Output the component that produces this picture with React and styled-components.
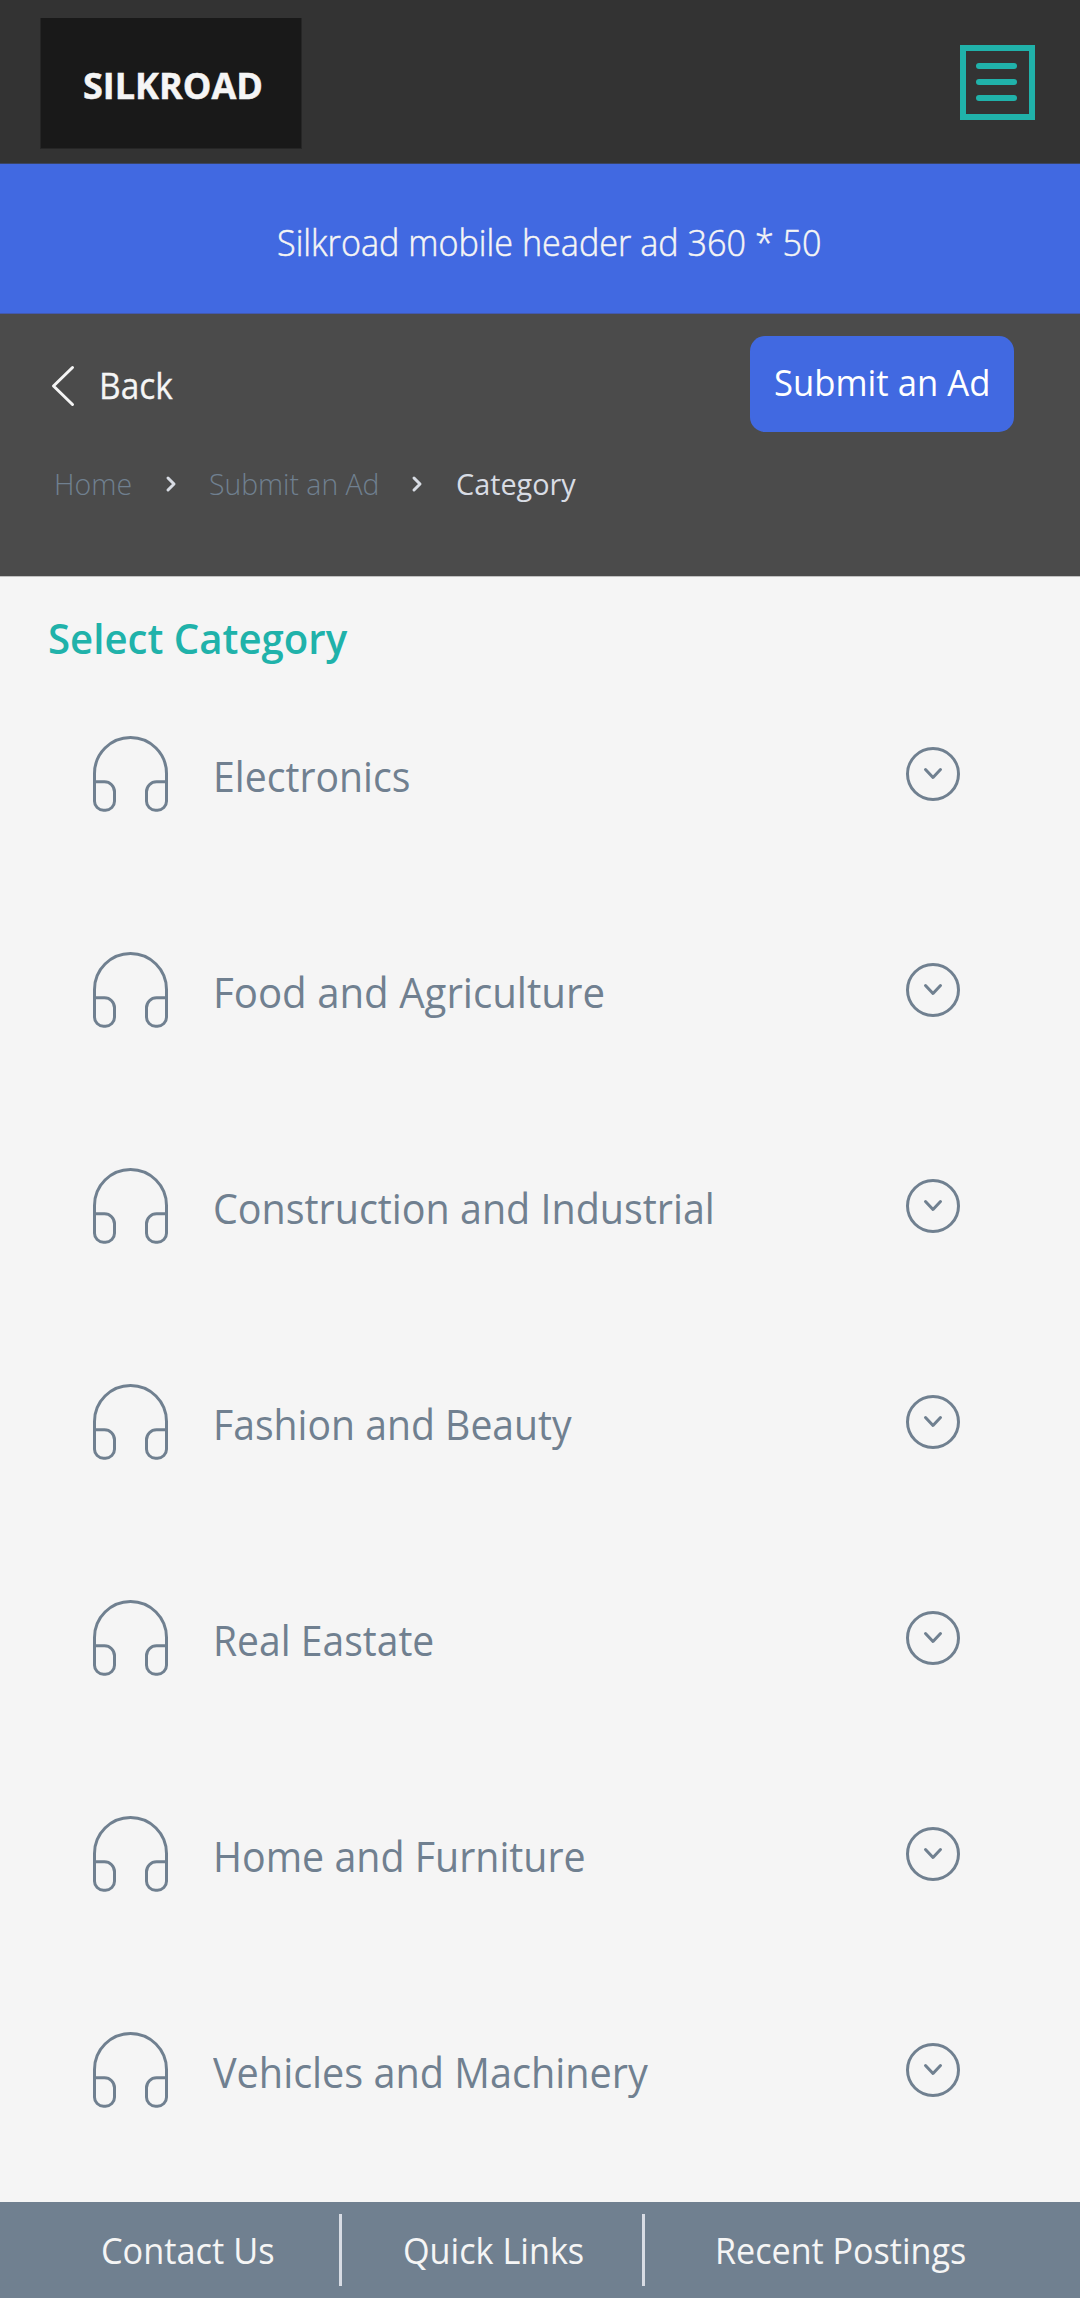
import React from 'react';
import styled, { createGlobalStyle } from 'styled-components';

const Global = createGlobalStyle`
  * { box-sizing: border-box; }
  body { margin: 0; background: #f5f5f5; font-family: "Open Sans", "Noto Sans", sans-serif; }
`;

const Page = styled.div`
  width: 1080px;
  height: 2298px;
  display: flex;
  flex-direction: column;
  background: #f5f5f5;
  overflow: hidden;
`;

/* Slightly condensed text run. */
const Text = styled.span`
  display: inline-block;
  justify-self: start;
  white-space: nowrap;
  transform-origin: left center;
  transform: scaleX(${p => p.$fit || 1});
  font-size: ${p => p.$size || 36}px;
  font-weight: ${p => p.$weight || 400};
  color: ${p => p.$color || '#f5f5f5'};
  -webkit-text-stroke: ${p => p.$stroke || 0}px currentColor;
`;

const Header = styled.header`
  height: 164px;
  flex: none;
  display: flex;
  justify-content: space-between;
  align-items: flex-start;
  padding: 18px 45px 0 40px;
  background: #333333;
  border-bottom: 1px solid #3a4566;
`;

const Logo = styled.div`
  width: 262px;
  height: 131px;
  display: flex;
  align-items: center;
  padding: 5px 0 0 42px;
  background: #191919;
  border: 1px solid #262626;
  border-top: 0;
`;

const MenuButton = styled.button`
  width: 75px;
  height: 75px;
  margin: 27px 0 0;
  padding: 12px 12px 0 10px;
  display: flex;
  flex-direction: column;
  gap: 10px;
  background: none;
  border: 6px solid #20b2aa;
`;

const Bar = styled.span`
  width: 41px;
  height: 6px;
  flex: none;
  border-radius: 3px;
  background: #20b2aa;
`;

const AdBanner = styled.section`
  height: 150px;
  flex: none;
  display: flex;
  align-items: center;
  padding: 8px 0 0 277px;
  background: #4169e1;
  border-bottom: 1px solid #4359ae;
`;

const NavPanel = styled.section`
  height: 263px;
  flex: none;
  padding: 22px 66px 0 50px;
  background: #4b4b4b;
  border-bottom: 1px solid #c0c0c0;
`;

const NavTop = styled.div`
  height: 96px;
  display: flex;
  justify-content: space-between;
`;

const BackLink = styled.div`
  display: flex;
  align-items: center;
  gap: 23px;
  padding-top: 3px;
`;

const SubmitButton = styled.button`
  width: 264px;
  height: 96px;
  padding: 0 0 3px 24px;
  display: flex;
  align-items: center;
  border: 0;
  border-radius: 15px;
  background: #4169e1;
  font-family: inherit;
`;

const Breadcrumb = styled.nav`
  display: grid;
  grid-template-columns: 110px 45px 201px 46px auto;
  align-items: center;
  margin-top: 32px;
  padding-left: 4px;
  line-height: 39px;
`;

const CrumbArrow = styled.svg`
  width: 14px;
  height: 20px;
  margin-top: 1px;
  display: block;
`;

const Main = styled.main`
  flex: 1;
`;

const Title = styled.h1`
  height: 89px;
  margin: 0;
  padding: 30px 0 0 48px;
  line-height: 62px;
  font-size: 42px;
`;

const Row = styled.div`
  height: 216px;
  display: grid;
  grid-template-columns: 122px 691px 58px;
  align-items: center;
  padding-left: 91px;
`;

const RowLabel = styled.div`
  padding-top: 2px;
`;

const Icon = styled.svg`
  display: block;
  width: ${p => p.$w}px;
  height: ${p => p.$h}px;
  fill: none;
  stroke: ${p => p.$color || '#708090'};
  stroke-width: 3;
  stroke-linecap: round;
  stroke-linejoin: round;
`;

const Footer = styled.footer`
  height: 96px;
  flex: none;
  display: grid;
  grid-template-columns: 238px 64px 239px 73px auto;
  align-items: center;
  padding-left: 101px;
  background: #708090;
`;

const FooterLink = styled(Text)`
  margin-top: 1px;
`;

const Divider = styled.span`
  width: 3px;
  height: 72px;
  background: #d8dce4;
`;

const Headphones = () => (
  <Icon $w={79} $h={80} viewBox="0 0 79 80">
    <path d="M3.5 47.800H13.500a10 10 0 0 1 10 10V67.200a9 9 0 0 1-9 9H12.500a9 9 0 0 1-9-9V39.500a36 36 0 0 1 72 0V67.200a9 9 0 0 1-9 9H64.500a9 9 0 0 1-9-9V57.800a10 10 0 0 1 10-10H75.500" />
  </Icon>
);

const Expand = () => (
  <Icon $w={58} $h={58} viewBox="0 0 58 58">
    <circle cx="29" cy="29" r="25.500" />
    <path d="M21.500 24.500L29 32.500L36.500 24.500" />
  </Icon>
);

const Crumb = () => (
  <CrumbArrow viewBox="0 0 14 20">
    <path d="M4 4L10 10L4 16" fill="none" stroke="#d8dce4" strokeWidth="3" strokeLinecap="round" strokeLinejoin="round" />
  </CrumbArrow>
);

const categories = [
  ['Electronics', 0.933],
  ['Food and Agriculture', 0.957],
  ['Construction and Industrial', 0.939],
  ['Fashion and Beauty', 0.932],
  ['Real Eastate', 0.93],
  ['Home and Furniture', 0.937],
  ['Vehicles and Machinery', 0.943],
];

export default function App() {
  return (
    <Page>
      <Global />
      <Header>
        <Logo><Text $weight={700} $stroke={0.5}>SILKROAD</Text></Logo>
        <MenuButton aria-label="Menu"><Bar /><Bar /><Bar /></MenuButton>
      </Header>
      <AdBanner>
        <Text $weight={300} $fit={0.949} $stroke={0.5}>Silkroad mobile header ad 360 * 50</Text>
      </AdBanner>
      <NavPanel>
        <NavTop>
          <BackLink>
            <Icon $w={26} $h={44} $color="#f5f5f5" viewBox="0 0 26 44">
              <path d="M22.500 3.500L3.500 22L22.500 40.500" />
            </Icon>
            <Text $fit={0.93} $stroke={0.3}>Back</Text>
          </BackLink>
          <SubmitButton><Text $color="#ffffff" $fit={0.963}>Submit an Ad</Text></SubmitButton>
        </NavTop>
        <Breadcrumb>
          <Text $size={30} $weight={300} $color="#708090" $fit={0.95}>Home</Text>
          <Crumb />
          <Text $size={30} $weight={300} $color="#708090" $fit={0.945}>Submit an Ad</Text>
          <Crumb />
          <Text $size={30} $color="#d8dce4" $fit={0.96}>Category</Text>
        </Breadcrumb>
      </NavPanel>
      <Main>
        <Title><Text $size={42} $weight={600} $color="#20b2aa" $fit={0.956}>Select Category</Text></Title>
        {categories.map(([name, fit]) => (
          <Row key={name}>
            <Headphones />
            <RowLabel><Text $size={42} $color="#708090" $fit={fit}>{name}</Text></RowLabel>
            <Expand />
          </Row>
        ))}
      </Main>
      <Footer>
        <FooterLink $fit={0.953}>Contact Us</FooterLink>
        <Divider />
        <FooterLink $fit={0.95}>Quick Links</FooterLink>
        <Divider />
        <FooterLink $fit={0.947}>Recent Postings</FooterLink>
      </Footer>
    </Page>
  );
}
